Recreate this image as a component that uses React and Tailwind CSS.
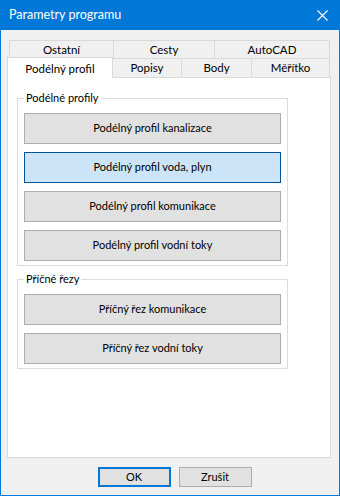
const font = { fontFamily: 'Lato, "Liberation Sans", sans-serif' }

function Btn({ label, active }) {
  return (
    <div
      className={[
        'flex h-[31px] items-center justify-center border text-[11px] text-black',
        active ? 'border-[#005499] bg-[#cce4f7]' : 'border-[#adadad] bg-[#e1e1e1]',
      ].join(' ')}
    >
      {label}
    </div>
  )
}

function Group({ title, items, className = '' }) {
  return (
    <fieldset className={'mx-[9px] w-[271px] border border-[#dcdcdc] px-[6px] pb-[4px] ' + className}>
      <legend className="px-[2px] text-[11px] leading-[14px] text-black">{title}</legend>
      <div className="flex flex-col gap-[8px] pt-[8px]">
        {items.map((it) => (
          <Btn key={it} label={it} active={it === 'Podélný profil voda, plyn'} />
        ))}
      </div>
    </fieldset>
  )
}

export default function App() {
  const backTabs = [
    ['Ostatní', 'w-[105px]'],
    ['Cesty', 'w-[101px]'],
    ['AutoCAD', 'w-[115px]'],
  ]
  const frontTabs = [
    ['Popisy', 'w-[69px]'],
    ['Body', 'w-[70px]'],
    ['Měřítko', 'w-[78px]'],
  ]
  return (
    <div className="flex h-[496px] w-[340px] flex-col bg-[#0078d7] px-px pb-px" style={font}>
      <div className="flex h-[30px] shrink-0 items-center justify-between pl-[8px] pr-[11px] text-[12.5px] text-white">
        <span>Parametry programu</span>
        <svg width="11" height="11" viewBox="0 0 11 11" stroke="white" strokeWidth="1.1">
          <path d="M0.5 0.5 L10.5 10.5 M10.5 0.5 L0.5 10.5" />
        </svg>
      </div>

      <div className="flex flex-1 flex-col bg-[#f0f0f0]">
        <div className="pt-[10px]">
          <div className="ml-[8px] flex h-[18px]">
            {backTabs.map(([t, w], i) => (
              <div
                key={t}
                className={`${w} flex items-center justify-center border-t border-r border-[#d9d9d9] text-[11.5px] text-black ${i === 0 ? 'border-l' : ''}`}
              >
                {t}
              </div>
            ))}
          </div>
          <div className="flex h-[19px] items-end">
            <div className="relative z-10 -mb-px ml-[6px] flex h-[21px] w-[106px] items-start justify-center border-t border-l border-r border-[#d9d9d9] bg-white pt-[2px] text-[11.5px] text-black">
              Podélný profil
            </div>
            {frontTabs.map(([t, w]) => (
              <div
                key={t}
                className={`${w} flex h-[19px] items-center justify-center border-t border-r border-[#d9d9d9] text-[11.5px] text-black`}
              >
                {t}
              </div>
            ))}
          </div>
        </div>

        <div className="ml-[6px] h-[381px] w-[324px] border border-[#d9d9d9] bg-white pt-[13px]">
          <Group
            title="Podélné profily"
            items={[
              'Podélný profil kanalizace',
              'Podélný profil voda, plyn',
              'Podélný profil komunikace',
              'Podélný profil vodní toky',
            ]}
          />
          <Group title="Příčné řezy" className="mt-[6px]" items={['Příčný řez komunikace', 'Příčný řez vodní toky']} />
        </div>

        <div className="flex justify-center gap-[8px] pl-[9px] pt-[9px]">
          <div className="flex h-[20px] w-[73px] items-center justify-center border-2 border-[#0078d7] bg-[#e1e1e1] text-[11px] text-black">
            OK
          </div>
          <div className="flex h-[20px] w-[73px] items-center justify-center border border-[#adadad] bg-[#e1e1e1] text-[11px] text-black">
            Zrušit
          </div>
        </div>
      </div>
    </div>
  )
}
